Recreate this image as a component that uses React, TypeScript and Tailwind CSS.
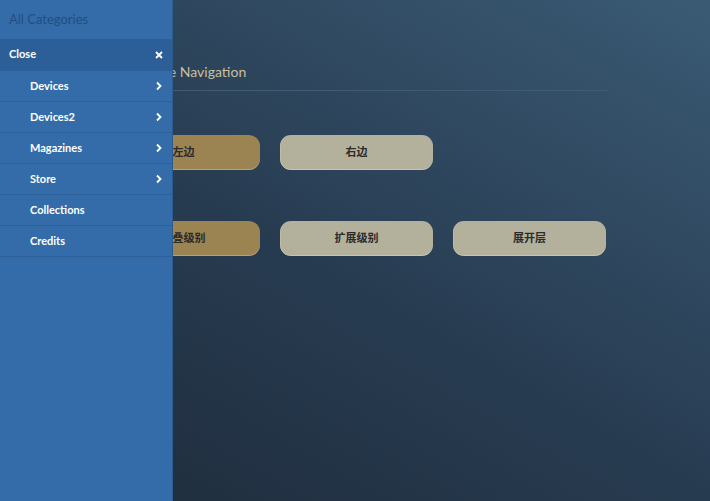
import React from "react";

const items = [
  { label: "Devices", arrow: true },
  { label: "Devices2", arrow: true },
  { label: "Magazines", arrow: true },
  { label: "Store", arrow: true },
  { label: "Collections", arrow: false },
  { label: "Credits", arrow: false },
];

function Chevron() {
  return (
    <svg width="8" height="10" viewBox="0 0 8 10" className="text-white">
      <path d="M2 1.5 L5.5 5 L2 8.5" fill="none" stroke="currentColor" strokeWidth="1.8" />
    </svg>
  );
}

function Btn({ label, gold }: { label: string; gold?: boolean }) {
  return (
    <div
      className={
        "w-[153px] h-[35px] rounded-[11px] flex items-center justify-center text-[11px] font-bold text-[#2b2b2b] shadow-[inset_0_-1px_0_rgba(255,255,255,0.25),inset_1px_0_0_rgba(255,255,255,0.15)] " +
        (gold ? "bg-[#9b8352]" : "bg-[#b3b09b]")
      }
    >
      {label}
    </div>
  );
}

export default function App() {
  return (
    <div
      className="relative w-[710px] h-[501px] overflow-hidden bg-[linear-gradient(30deg,#1e2b3a_0%,#273b50_45%,#3a5a74_100%)]"
      style={{ fontFamily: "Lato, 'Noto Sans CJK SC', sans-serif" }}
    >
      <div className="w-[500px] ml-[107px] pt-[63px]">
        <h1 className="text-[14px] text-[#c8c0a0] pb-[9px] border-b border-[#3f5c74] leading-[18px]">
          Responsive Navigation
        </h1>
        <div className="flex gap-[20px] mt-[44px]">
          <Btn label="左边" gold />
          <Btn label="右边" />
        </div>
        <div className="flex gap-[20px] mt-[51px]">
          <Btn label="重叠级别" gold />
          <Btn label="扩展级别" />
          <Btn label="展开层" />
        </div>
      </div>

      <div className="absolute left-0 top-0 w-[173px] h-full bg-[#336ca8] border-r border-[#2b5c90]">
        <div className="h-[39px] flex items-center pl-[9px] text-[13px] text-[#1f4f85]">All Categories</div>
        <div className="h-[32px] flex items-center justify-between pl-[9px] pr-[8px] bg-[#2c5f97] border-b border-[#2d6098] text-[11px] font-bold text-white">
          <span>Close</span>
          <svg width="10" height="10" viewBox="0 0 10 10">
            <path d="M2 2 L8 8 M8 2 L2 8" stroke="white" strokeWidth="1.8" />
          </svg>
        </div>
        {items.map((it) => (
          <div
            key={it.label}
            className="h-[31px] flex items-center justify-between pl-[30px] pr-[9px] border-b border-[#2d6098] text-[11px] font-bold text-white"
          >
            <span>{it.label}</span>
            {it.arrow && <Chevron />}
          </div>
        ))}
      </div>
    </div>
  );
}
